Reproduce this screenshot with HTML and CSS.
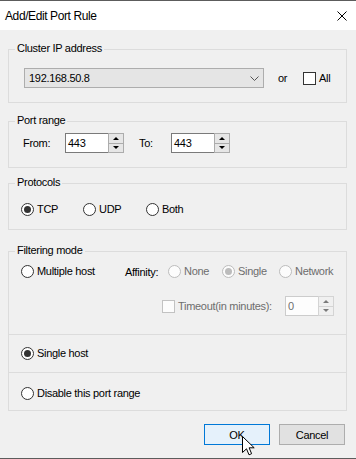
FILE: index.html
```html
<!DOCTYPE html>
<html>
<head>
<meta charset="utf-8">
<link rel="stylesheet" href="styles.css">
</head>
<body>
<div class="window">
  <div class="titlebar">
    <span class="title">Add/Edit Port Rule</span>
    <svg class="close" width="10" height="10" viewBox="0 0 10 10"><path d="M0.5 0.5 L9.5 9.5 M9.5 0.5 L0.5 9.5" stroke="#000" stroke-width="1"/></svg>
  </div>
  <div class="content">
    <section class="group g-cluster">
      <div class="legend">Cluster IP address</div>
      <div class="row cluster-row">
        <div class="combo">
          <span class="combo-text">192.168.50.8</span>
          <svg class="chev" width="9" height="5" viewBox="0 0 9 5"><polyline points="0.5,0.5 4.5,4.5 8.5,0.5" fill="none" stroke="#555" stroke-width="1"/></svg>
        </div>
        <span class="or">or</span>
        <span class="check"></span>
        <span class="all">All</span>
      </div>
    </section>

    <section class="group g-port">
      <div class="legend">Port range</div>
      <div class="row port-row">
        <span class="lbl-from">From:</span>
        <div class="spin">
          <span class="spin-val">443</span>
          <div class="spin-btns"><span class="sb up"></span><span class="sb down"></span></div>
        </div>
        <span class="lbl-to">To:</span>
        <div class="spin">
          <span class="spin-val">443</span>
          <div class="spin-btns"><span class="sb up"></span><span class="sb down"></span></div>
        </div>
      </div>
    </section>

    <section class="group g-proto">
      <div class="legend">Protocols</div>
      <div class="row proto-row">
        <label class="opt w-tcp"><span class="radio on"></span><span>TCP</span></label>
        <label class="opt w-udp"><span class="radio"></span><span>UDP</span></label>
        <label class="opt"><span class="radio"></span><span>Both</span></label>
      </div>
    </section>

    <section class="group g-filter">
      <div class="sec sec-multi">
        <div class="legend">Filtering mode</div>
        <div class="row multi-row">
          <label class="opt w-multi"><span class="radio"></span><span>Multiple host</span></label>
          <span class="affinity">Affinity:</span>
          <label class="opt w-none dis"><span class="radio dis"></span><span>None</span></label>
          <label class="opt w-single dis"><span class="radio dis on"></span><span>Single</span></label>
          <label class="opt dis"><span class="radio dis"></span><span>Network</span></label>
        </div>
        <div class="row timeout-row">
          <span class="check dis"></span>
          <span class="timeout-lbl dis">Timeout(in minutes):</span>
          <div class="spin spin-dis">
            <span class="spin-val">0</span>
            <div class="spin-btns"><span class="sb up"></span><span class="sb down"></span></div>
          </div>
        </div>
      </div>
      <div class="sec sec-single">
        <label class="opt"><span class="radio on"></span><span>Single host</span></label>
      </div>
      <div class="sec sec-disable">
        <label class="opt"><span class="radio"></span><span>Disable this port range</span></label>
      </div>
    </section>

    <div class="buttons">
      <button class="btn btn-ok">OK</button>
      <button class="btn">Cancel</button>
    </div>
  </div>
  <svg class="cursor" width="14" height="22" viewBox="0 0 14 22"><path d="M0.5 0.5 L0.5 16.5 L4.5 12.8 L7 18.8 L9.6 17.7 L7.1 11.8 L12.2 11.8 Z" fill="#fff" stroke="#000" stroke-width="1" stroke-linejoin="miter"/></svg>
</div>
</body>
</html>
```
FILE: styles.css
```css
* { box-sizing: border-box; }

body {
  margin: 0;
  font-family: "Liberation Sans", Arial, sans-serif;
  font-size: 11px;
  letter-spacing: -0.3px;
  color: #000;
  background: #f0f0f0;
}

.window {
  position: relative;
  width: 356px;
  height: 459px;
  background: #f0f0f0;
  border-top: 1px solid #5c5c5c;
  border-bottom: 1px solid #5c5c5c;
  overflow: hidden;
}

.titlebar {
  height: 29px;
  background: #fff;
  display: flex;
  align-items: center;
  justify-content: space-between;
  padding: 0 9px 0 5px;
}

.title {
  font-size: 12px;
  letter-spacing: -0.4px;
}

.close { display: block; }

.content {
  padding: 0 9px 0 8px;
}

.group {
  border: 1px solid #dcdcdc;
}

.legend {
  display: table;
  margin: -9px 0 0 6px;
  padding: 0 2px;
  line-height: 15px;
  background: #f0f0f0;
}

.row {
  display: flex;
  align-items: center;
}

/* Cluster IP */
.g-cluster { margin-top: 19px; padding-bottom: 14px; }
.cluster-row { margin-top: 12px; padding-left: 15px; height: 20px; }

.combo {
  width: 240px;
  height: 20px;
  background: #e5e5e5;
  border: 1px solid #adadad;
  display: flex;
  align-items: center;
  justify-content: space-between;
  padding: 0 4px 0 4px;
}
.chev { display: block; margin-top: 1px; }

.or { width: 25px; margin-left: 14px; }
.all { margin-left: 3px; }

.check {
  width: 13px;
  height: 13px;
  border: 1px solid #333;
  background: #fff;
  flex: none;
}
.check.dis {
  border-color: #c2c2c2;
  background: #fcfcfc;
}

/* Port range */
.g-port { margin-top: 18px; padding-bottom: 14px; }
.port-row { margin-top: 5px; padding-left: 14px; height: 20px; }
.lbl-from { width: 42px; }
.lbl-to { width: 32px; margin-left: 15px; }

.spin {
  width: 59px;
  height: 20px;
  border: 1px solid #7a7a7a;
  background: #fff;
  display: flex;
}
.spin-val {
  flex: 1;
  padding-left: 2px;
  line-height: 18px;
}
.spin-btns {
  width: 16px;
  margin: -1px -1px -1px 0;
  display: flex;
  flex-direction: column;
}
.sb {
  flex: 1;
  background: #e6e6e6;
  border: 1px solid #acacac;
  display: flex;
  align-items: center;
  justify-content: center;
}
.sb.down { border-top: none; }
.sb.up::after {
  content: "";
  border-left: 3px solid transparent;
  border-right: 3px solid transparent;
  border-bottom: 3px solid #000;
}
.sb.down::after {
  content: "";
  border-left: 3px solid transparent;
  border-right: 3px solid transparent;
  border-top: 3px solid #000;
}

.spin-dis {
  width: 49px;
  border-color: #cccccc;
  background: #fdfdfd;
  color: #6d6d6d;
}
.spin-dis .sb {
  background: #f0f0f0;
  border-color: #d4d4d4;
}
.spin-dis .sb.up::after { border-bottom-color: #7a7a7a; }
.spin-dis .sb.down::after { border-top-color: #7a7a7a; }

/* Radios */
.opt {
  display: flex;
  align-items: center;
  gap: 3px;
  line-height: 15px;
  height: 15px;
}
.radio {
  width: 13px;
  height: 13px;
  border-radius: 50%;
  border: 1px solid #333;
  background: #fff;
  display: flex;
  align-items: center;
  justify-content: center;
  flex: none;
}
.radio.on::after {
  content: "";
  width: 7px;
  height: 7px;
  border-radius: 50%;
  background: #333;
}
.radio.dis {
  border-color: #bcbcbc;
  background: #fcfcfc;
}
.radio.dis.on::after { background: #bcbcbc; }
.opt.dis, .dis { color: #6d6d6d; }

/* Protocols */
.g-proto { margin-top: 15px; padding-bottom: 12px; }
.proto-row { margin-top: 12px; padding-left: 12px; height: 15px; }
.w-tcp { width: 62px; }
.w-udp { width: 63px; }

/* Filtering */
.g-filter { margin-top: 21px; }
.sec-multi { padding-bottom: 18px; }
.multi-row { margin-top: 6px; padding-left: 12px; height: 15px; }
.w-multi { width: 104px; }
.affinity { width: 43px; }
.w-none { width: 54px; }
.w-single { width: 57px; }

.timeout-row { margin-top: 17px; padding-left: 153px; height: 20px; }
.timeout-lbl { width: 107px; margin-left: 3px; }

.sec-single {
  border-top: 1px solid #dcdcdc;
  padding: 11px 0 11px 12px;
}
.sec-disable {
  border-top: 1px solid #dcdcdc;
  padding: 13px 0 9px 12px;
}

/* Buttons */
.buttons {
  display: flex;
  justify-content: flex-end;
  gap: 9px;
  margin-top: 13px;
  padding-right: 2px;
}
.btn {
  width: 66px;
  height: 21px;
  padding: 0;
  font-family: inherit;
  font-size: 11px;
  letter-spacing: -0.3px;
  color: #000;
  background: #e1e1e1;
  border: 1px solid #adadad;
  border-radius: 0;
}
.btn-ok {
  background: #e5f1fb;
  border-color: #0078d7;
}

.cursor {
  position: absolute;
  left: 242px;
  top: 435px;
}
```
